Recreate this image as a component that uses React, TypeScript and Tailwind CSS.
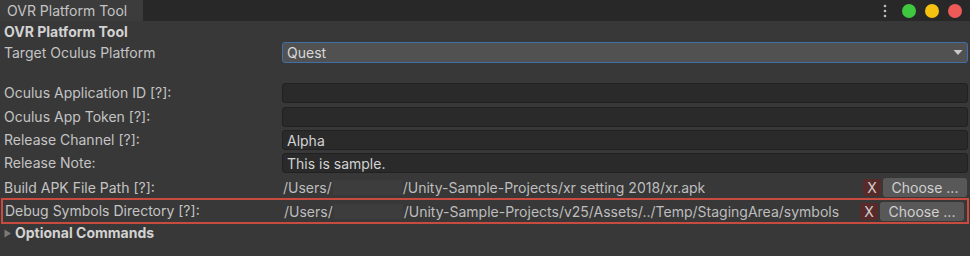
import React from "react";

const Label = ({ children }: { children: React.ReactNode }) => (
  <div className="w-[282px] shrink-0 pl-[4px] text-[14px] text-[#c4c4c4] whitespace-nowrap leading-none">
    {children}
  </div>
);

const Field = ({ text }: { text?: string }) => (
  <div className="flex-1 h-full rounded-[3px] bg-[#2a2a2a] border border-[#212121] flex items-center pl-[4px] text-[14px] text-[#d2d2d2]">
    {text}
  </div>
);

const PathRow = ({ before, after }: { before: string; after: string }) => (
  <div className="flex-1 flex items-center h-full">
    <div className="flex-1 flex items-center text-[14px] text-[#bdbdbd] pl-[1px] whitespace-nowrap overflow-hidden">
      <span>{before}</span>
      <span className="inline-block w-[69px] h-[15px] bg-[#3d3d3d] mx-[1px]" />
      <span>{after}</span>
    </div>
    <div className="w-[18px] h-[17px] bg-[#582a2a] rounded-[2px] flex items-center justify-center text-[14px] text-[#d0d0d0] mr-[2px]">
      X
    </div>
    <div className="w-[84px] h-[19px] bg-[#585858] rounded-[3px] flex items-center justify-center text-[14px] text-[#d0d0d0] mr-[3px]">
      Choose ...
    </div>
  </div>
);

export default function App() {
  return (
    <div
      className="w-[970px] h-[256px] bg-[#383838] overflow-hidden flex flex-col"
      style={{ fontFamily: "Inter, 'Noto Sans', sans-serif" }}
    >
      {/* tab bar */}
      <div className="h-[21px] bg-[#282828] flex items-stretch shrink-0">
        <div className="w-[143px] bg-[#3c3c3c] flex items-center pl-[7px] text-[14px] text-[#c4c4c4] leading-none">
          OVR Platform Tool
        </div>
        <div className="flex-1" />
        <div className="flex items-center gap-[9px] pr-[8px]">
          <svg width="4" height="14" viewBox="0 0 4 14" className="mr-[6px]">
            <circle cx="2" cy="2" r="1.3" fill="#bdbdbd" />
            <circle cx="2" cy="7" r="1.3" fill="#bdbdbd" />
            <circle cx="2" cy="12" r="1.3" fill="#bdbdbd" />
          </svg>
          <div className="w-[14px] h-[14px] rounded-full bg-[#3fc83f]" />
          <div className="w-[14px] h-[14px] rounded-full bg-[#f4c20f]" />
          <div className="w-[14px] h-[14px] rounded-full bg-[#ee5a58]" />
        </div>
      </div>

      {/* header */}
      <div className="h-[21px] flex items-center pl-[4px] text-[14px] font-bold text-[#d2d2d2] leading-none">
        OVR Platform Tool
      </div>

      {/* target platform */}
      <div className="h-[21px] flex items-center">
        <Label>Target Oculus Platform</Label>
        <div className="flex-1 h-full mr-[2px] rounded-[3px] bg-[#515151] border border-[#3f6ea8] flex items-center justify-between pl-[4px] pr-[4px] text-[14px] text-[#d8d8d8]">
          <span>Quest</span>
          <svg width="10" height="7" viewBox="0 0 10 7">
            <path d="M0.5 1 L9.5 1 L5 6 Z" fill="#c8c8c8" />
          </svg>
        </div>
      </div>

      <div className="h-[20px] shrink-0" />

      <div className="h-[20px] flex items-center shrink-0">
        <Label>Oculus Application ID [?]:</Label>
        <div className="flex-1 h-full mr-[2px] flex"><Field /></div>
      </div>
      <div className="h-[20px] mt-[4px] flex items-center shrink-0">
        <Label>Oculus App Token [?]:</Label>
        <div className="flex-1 h-full mr-[2px] flex"><Field /></div>
      </div>
      <div className="h-[20px] mt-[3px] flex items-center shrink-0">
        <Label>Release Channel [?]:</Label>
        <div className="flex-1 h-full mr-[2px] flex"><Field text="Alpha" /></div>
      </div>
      <div className="h-[20px] mt-[3px] flex items-center shrink-0">
        <Label>Release Note:</Label>
        <div className="flex-1 h-full mr-[2px] flex"><Field text="This is sample." /></div>
      </div>

      <div className="h-[21px] mt-[4px] flex items-center shrink-0">
        <Label>Build APK File Path [?]:</Label>
        <PathRow before="/Users/" after="/Unity-Sample-Projects/xr setting 2018/xr.apk" />
      </div>
      <div className="h-[26px] mx-[1px] border-2 border-[#c94a3e] flex items-center shrink-0">
        <div className="w-[280px] shrink-0 pl-[2px] text-[14px] text-[#c4c4c4] whitespace-nowrap leading-none">
          Debug Symbols Directory [?]:
        </div>
        <PathRow before="/Users/" after="/Unity-Sample-Projects/v25/Assets/../Temp/StagingArea/symbols" />
      </div>

      <div className="h-[18px] flex items-center pl-[4px] gap-[3px] shrink-0">
        <svg width="8" height="9" viewBox="0 0 8 9">
          <path d="M0.5 0.5 L7 4.5 L0.5 8.5 Z" fill="#7a7a7a" />
        </svg>
        <span className="text-[14px] font-bold text-[#d2d2d2] leading-none">Optional Commands</span>
      </div>
    </div>
  );
}
